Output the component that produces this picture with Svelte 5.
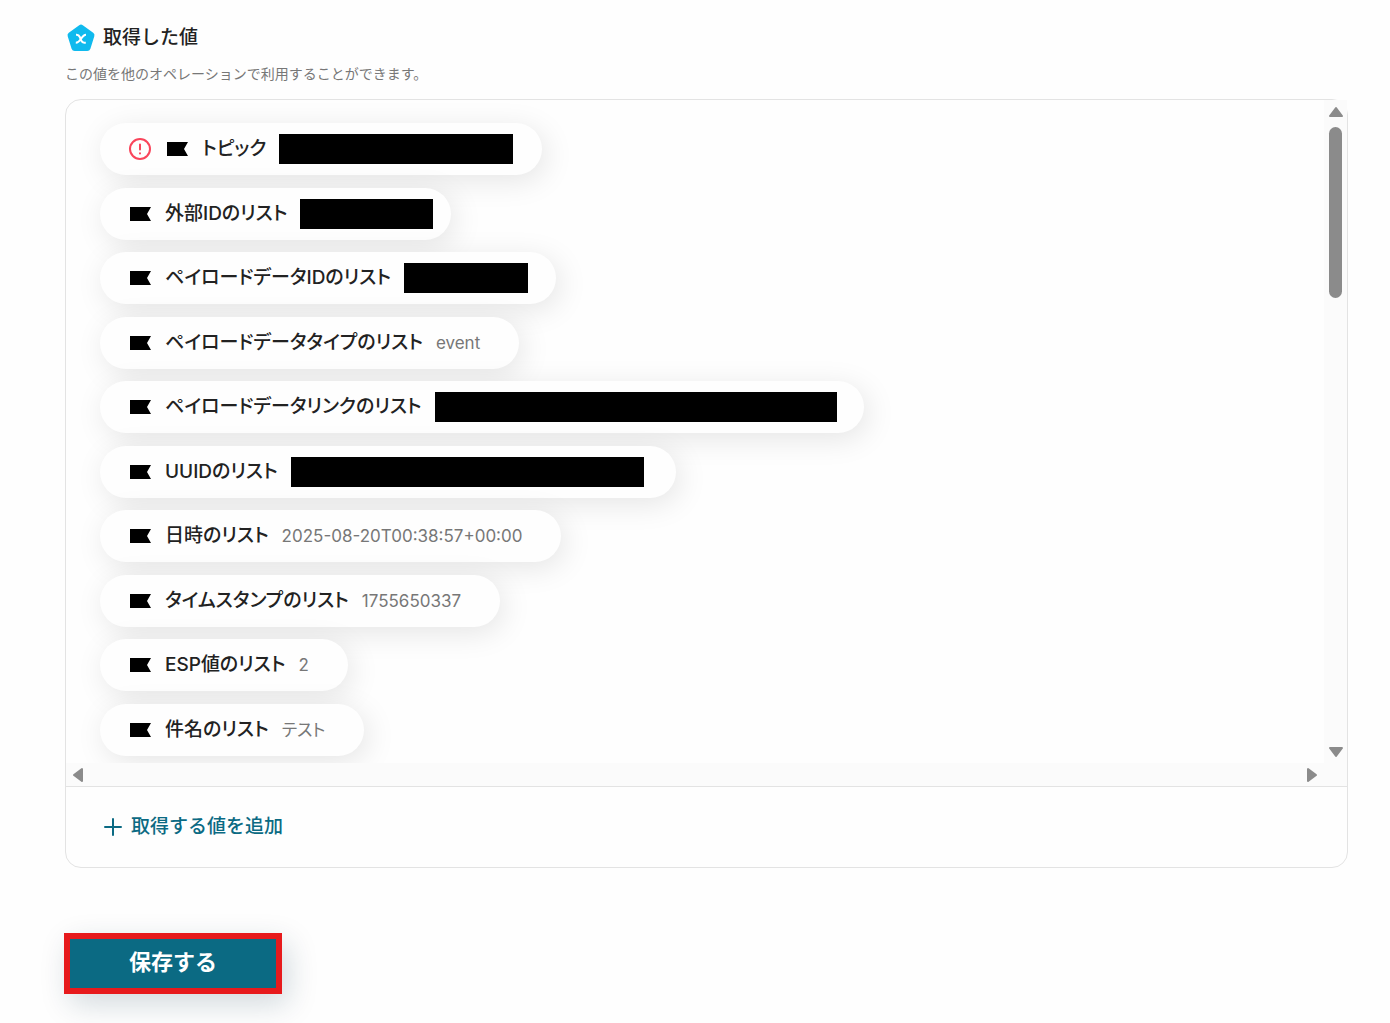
<script lang="ts">
	type Item = {
		label: string;
		value?: string;
		slot?: number;
		mask?: number;
		alert?: boolean;
	};

	const items: Item[] = [
		{ label: 'トピック', slot: 224, mask: 234, alert: true },
		{ label: '外部IDのリスト', slot: 112, mask: 133 },
		{ label: 'ペイロードデータIDのリスト', slot: 113, mask: 124 },
		{ label: 'ペイロードデータタイプのリスト', value: 'event' },
		{ label: 'ペイロードデータリンクのリスト', slot: 390, mask: 402 },
		{ label: 'UUIDのリスト', slot: 346, mask: 353 },
		{ label: '日時のリスト', value: '2025-08-20T00:38:57+00:00' },
		{ label: 'タイムスタンプのリスト', value: '1755650337' },
		{ label: 'ESP値のリスト', value: '2' },
		{ label: '件名のリスト', value: 'テスト' }
	];
</script>

<main>
	<header>
		<h2>
			<svg class="logo" viewBox="0 0 28 28" aria-hidden="true">
				<path
					d="M12.2 1.2Q14 0 15.8 1.2L26.2 8.8Q28 10.2 27.3 12.3L23.4 24.7Q22.6 27 20.3 27H7.7Q5.4 27 4.6 24.7L.7 12.3Q0 10.2 1.8 8.8Z"
					fill="#10baee"
				/>
				<path
					d="M9 10.800h.6c1.800 0 2.600 .8 3.200 2.200l1.400 3.400c.6 1.400 1.400 2.400 3.100 2.400h1.500M19 10.800c-2 0-3.200 1.400-4.900 4-1.700 2.600-2.900 4-5.300 4"
					fill="none"
					stroke="#fff"
					stroke-width="2"
				/>
			</svg>
			取得した値
		</h2>
		<p>この値を他のオペレーションで利用することができます。</p>
	</header>

	<section class="panel">
		<div class="pane">
			<ul class="list">
				{#each items as item}
					<li class="chip">
						{#if item.alert}
							<svg class="alert" viewBox="0 0 24 24" aria-hidden="true">
								<circle cx="12" cy="12" r="10" />
								<path d="M12 7.500v5M12 16.200v.3" />
							</svg>
						{/if}
						<svg class="flag" viewBox="0 0 22 14" aria-hidden="true">
							<path d="M1 0H22L18 7L22 14H1Z" />
						</svg>
						<span class="label">{item.label}</span>
						{#if item.mask}
							<span class="slot" style="width: {item.slot}px">
								<span class="mask" style="width: {item.mask}px"></span>
							</span>
						{:else}
							<span class="value">{item.value}</span>
						{/if}
					</li>
				{/each}
			</ul>
			<div class="bar vertical">
				<svg viewBox="0 0 16 12" width="16" height="12"><path d="M8 2L14 10H2Z" /></svg>
				<div class="thumb"></div>
				<svg viewBox="0 0 16 12" width="16" height="12"><path d="M8 10L14 2H2Z" /></svg>
			</div>
			<div class="bar horizontal">
				<svg viewBox="0 0 12 16" width="12" height="16"><path d="M2 8L10 2V14Z" /></svg>
				<svg viewBox="0 0 12 16" width="12" height="16"><path d="M10 8L2 2V14Z" /></svg>
			</div>
			<div class="bar"></div>
		</div>
		<div class="footer">
			<button class="add" type="button">
				<svg viewBox="0 0 18 18" width="18" height="18" aria-hidden="true">
					<path d="M9 1V17M1 9H17" />
				</svg>
				取得する値を追加
			</button>
		</div>
	</section>

	<button class="save" type="button">保存する</button>
</main>

<style>
	:global(body) {
		background: #fefefe;
	}

	main {
		padding: 20px 42px 29px 65px;
		font-family: Inter, 'Noto Sans CJK JP', sans-serif;
		color: #222;
	}

	h2 {
		display: flex;
		align-items: center;
		gap: 8px;
		margin: 0;
		padding-left: 2px;
		font-size: 19px;
		font-weight: 500;
		line-height: 36px;
	}

	.logo {
		width: 28px;
		height: 28px;
	}

	p {
		margin: 5px 0 13px;
		font-size: 14px;
		line-height: 25px;
		color: #777;
	}

	.panel {
		border: 1px solid #e3e3e3;
		border-radius: 16px;
	}

	.pane {
		display: grid;
		grid-template-columns: minmax(0, 1fr) 23px;
		grid-template-rows: auto 23px;
		border-bottom: 1px solid #e3e3e3;
	}

	.list {
		display: flex;
		flex-direction: column;
		align-items: flex-start;
		justify-content: space-between;
		box-sizing: border-box;
		height: 663px;
		margin: 0;
		padding: 23px 34px 7px;
		overflow: hidden;
		list-style: none;
		border-top-left-radius: 15px;
	}

	.chip {
		display: flex;
		align-items: center;
		height: 52px;
		padding: 0 39px 0 29px;
		border-radius: 26px;
		background: #fefefe;
		box-shadow: 4px 6px 30px rgba(0, 0, 0, 0.1);
		font-feature-settings: 'palt';
		white-space: nowrap;
	}

	.alert {
		width: 24px;
		height: 24px;
		margin: 0 14px 0 -1px;
		fill: none;
		stroke: #f9455b;
		stroke-width: 2;
		stroke-linecap: round;
	}

	.flag {
		width: 22px;
		height: 14px;
		margin-right: 14px;
	}

	.label {
		margin-right: 13px;
		font-size: 19px;
		font-weight: 500;
		line-height: 28px;
	}

	.value {
		font-size: 17px;
		line-height: 28px;
		color: #777;
	}

	.mask {
		display: block;
		height: 30px;
		background: #000;
	}

	.bar {
		display: flex;
		align-items: center;
		justify-content: space-between;
		background: #fbfbfb;
	}

	.bar path {
		fill: #8b8b8b;
		stroke: #8b8b8b;
		stroke-width: 2;
		stroke-linejoin: round;
	}

	.vertical {
		flex-direction: column;
		padding: 6px 0 5px;
	}

	.vertical .thumb {
		width: 13px;
		height: 171px;
		margin: 9px 0 auto;
		border-radius: 7px;
		background: #8b8b8b;
	}

	.horizontal {
		padding: 0 6px;
	}

	.footer {
		padding: 20px 38px;
	}

	.add {
		display: flex;
		align-items: center;
		gap: 9px;
		padding: 0;
		border: 0;
		background: none;
		font: inherit;
		font-size: 19px;
		font-weight: 500;
		line-height: 40px;
		color: #0b6a83;
		cursor: pointer;
	}

	.add path {
		stroke: currentColor;
		stroke-width: 2;
		stroke-linecap: round;
	}

	.save {
		display: block;
		margin: 65px 0 0 -1px;
		padding: 0 59px 2px;
		border: 6px solid #e71a1c;
		background: #0b6a83;
		box-shadow: 6px 10px 30px rgba(11, 50, 70, 0.18);
		font: inherit;
		font-size: 22px;
		font-weight: 700;
		line-height: 47px;
		color: #fff;
		cursor: pointer;
	}
</style>
